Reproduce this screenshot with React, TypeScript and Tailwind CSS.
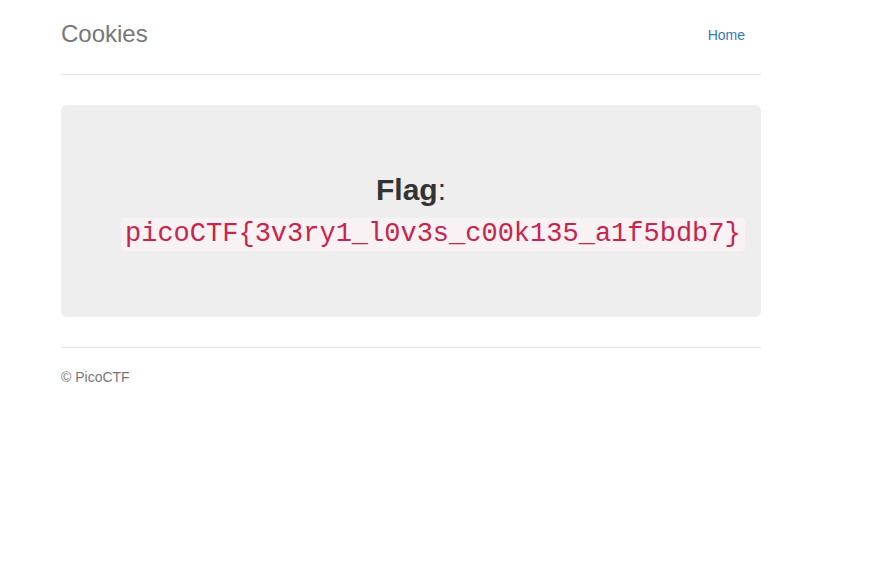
export default function App() {
  return (
    <div className="min-h-[574px] bg-white pt-[14px] font-['Liberation_Sans',Arial,sans-serif] text-[14px] leading-[20px] text-[#333]">
      <div className="ml-[61px] w-[700px]">
        <div className="flex items-start justify-between border-b border-[#e5e5e5] pb-[20px]">
          <h3 className="m-0 text-[24px] leading-[40px] font-medium text-[#777]">Cookies</h3>
          <nav>
            <a href="#" className="block px-[16px] pt-[11px] pb-[9px] text-[14px] leading-[20px] text-[#337ab7]">
              Home
            </a>
          </nav>
        </div>
        <div className="mt-[30px] rounded-[6px] bg-[#eee] px-[60px] pt-[48px] pb-[66px] text-center">
          <h2 className="mt-[20px] text-[30px] leading-[33px] font-medium text-[#333]">
            <b className="font-bold">Flag</b>:{" "}
            <code className="mt-[12px] inline-block rounded-[4px] bg-[#f9f2f4] px-[4px] py-[2px] align-top font-['Liberation_Mono','Courier_New',monospace] text-[27px] leading-[29px] font-normal whitespace-nowrap text-[#c7254e]">
              picoCTF{"{"}3v3ry1_l0v3s_c00k135_a1f5bdb7{"}"}
            </code>
          </h2>
        </div>
        <footer className="mt-[30px] border-t border-[#e5e5e5] pt-[19px]">
          <p className="m-0 text-[14px] leading-[20px] text-[#777]">© PicoCTF</p>
        </footer>
      </div>
    </div>
  );
}
